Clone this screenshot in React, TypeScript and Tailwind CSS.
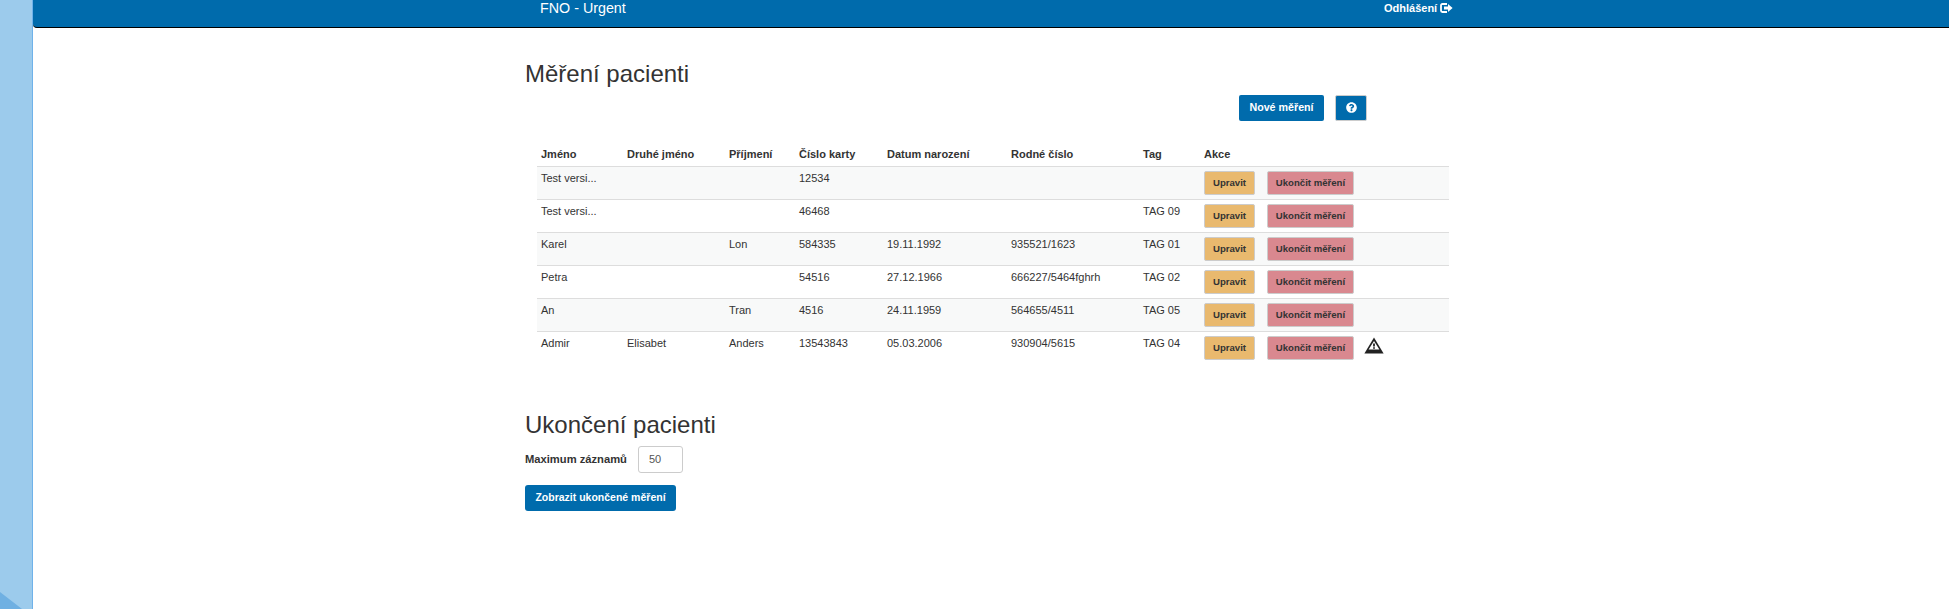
import { FaQuestionCircle } from 'react-icons/fa';

const columns = ['Jméno', 'Druhé jméno', 'Příjmení', 'Číslo karty', 'Datum narození', 'Rodné číslo', 'Tag', 'Akce'];

const patients = [
  { name: 'Test versi...', second: '', last: '', card: '12534', birth: '', id: '', tag: '' },
  { name: 'Test versi...', second: '', last: '', card: '46468', birth: '', id: '', tag: 'TAG 09' },
  { name: 'Karel', second: '', last: 'Lon', card: '584335', birth: '19.11.1992', id: '935521/1623', tag: 'TAG 01' },
  { name: 'Petra', second: '', last: '', card: '54516', birth: '27.12.1966', id: '666227/5464fghrh', tag: 'TAG 02' },
  { name: 'An', second: '', last: 'Tran', card: '4516', birth: '24.11.1959', id: '564655/4511', tag: 'TAG 05' },
  { name: 'Admir', second: 'Elisabet', last: 'Anders', card: '13543843', birth: '05.03.2006', id: '930904/5615', tag: 'TAG 04', warning: true },
];

function SignOutIcon() {
  return (
    <svg width="13" height="10" viewBox="0 0 13 10" className="ml-[3px]">
      <path d="M7 1H2.4C1.6 1 1 1.6 1 2.4v5.2C1 8.4 1.6 9 2.4 9H7" fill="none" stroke="white" strokeWidth="1.8" />
      <path d="M4 3.5h4V1l4.6 4L8 9V6.5H4z" fill="white" />
    </svg>
  );
}

function WarningIcon() {
  return (
    <svg width="20" height="17" viewBox="0 0 20 17" className="ml-[10px] mb-[5px]">
      <path d="M10 0.5 19.6 16.5H0.4z" fill="#222" />
      <path d="M10 4 15.4 12.6H4.6z" fill="white" />
      <path d="M9.1 6.4h1.8v3.2H9.1z" fill="#222" />
      <path d="M9.1 10.2h1.8v1.6H9.1z" fill="#222" />
    </svg>
  );
}

function Patients() {
  return (
    <table className="w-[912px] table-fixed border-collapse text-[11px] leading-[17px] text-[#333]">
      <colgroup>
        <col className="w-[86px]" />
        <col className="w-[102px]" />
        <col className="w-[70px]" />
        <col className="w-[88px]" />
        <col className="w-[124px]" />
        <col className="w-[132px]" />
        <col className="w-[61px]" />
        <col />
      </colgroup>
      <thead>
        <tr className="border-b-[1.5px] border-[#ddd]">
          {columns.map((col) => (
            <th key={col} className="px-1 pt-[5px] pb-[3px] text-left font-bold">{col}</th>
          ))}
        </tr>
      </thead>
      <tbody>
        {patients.map((p, i) => (
          <tr key={p.card} className={`h-[33px] border-b border-[#ddd] last:border-b-0 ${i % 2 === 0 ? 'bg-[#f8f9f9]' : ''}`}>
            <td className="px-1 pt-[3px] align-top">{p.name}</td>
            <td className="px-1 pt-[3px] align-top">{p.second}</td>
            <td className="px-1 pt-[3px] align-top">{p.last}</td>
            <td className="px-1 pt-[3px] align-top">{p.card}</td>
            <td className="px-1 pt-[3px] align-top">{p.birth}</td>
            <td className="px-1 pt-[3px] align-top">{p.id}</td>
            <td className="px-1 pt-[3px] align-top">{p.tag}</td>
            <td className="p-1 align-top">
              <div className="flex items-center">
                <button className="h-6 w-[51px] rounded-[2px] border border-[#ccc] bg-[#e9b96e] pb-px text-[9.6px] font-bold text-[#333]">Upravit</button>
                <button className="ml-3 h-6 w-[87px] rounded-[2px] border border-[#ccc] bg-[#d9888f] pb-px text-[9.6px] font-bold text-[#333]">Ukončit měření</button>
                {p.warning && <WarningIcon />}
              </div>
            </td>
          </tr>
        ))}
      </tbody>
    </table>
  );
}

export default function App() {
  return (
    <div className="flex h-screen overflow-hidden bg-white font-['Liberation_Sans',Arial,sans-serif]">
      <aside className="relative w-[33px] shrink-0 border-r border-[#6fb2ea] bg-[#9ccbec]">
        <svg width="22" height="17" viewBox="0 0 22 17" className="absolute bottom-0 left-0">
          <path d="M0 0 22 17H0z" fill="#6fb0e2" />
        </svg>
      </aside>

      <div className="min-w-0 flex-1">
        <nav className="flex h-[28px] items-start rounded-bl-[4px] border-b border-black bg-[#006bac] text-white">
          <span className="w-[851px] pl-[507px] text-[14.3px] leading-4">FNO - Urgent</span>
          <a className="mt-px flex items-center pl-[500px] text-[11px] font-bold leading-[14px]">
            Odhlášení
            <SignOutIcon />
          </a>
        </nav>

        <main className="ml-[492px] w-[924px] text-[#333]">
          <h1 className="mt-[33px] text-[24px] leading-[26px]">Měření pacienti</h1>

          <div className="mt-[8px] flex pl-[714px]">
            <button className="h-[26px] w-[85px] rounded-[2px] bg-[#006bac] pb-[2px] text-[10.7px] font-bold text-white">Nové měření</button>
            <button className="ml-[11px] flex h-[26px] w-[32px] items-center justify-center rounded-[2px] border border-[#ccc] bg-[#006bac] pb-[2px] text-white">
              <FaQuestionCircle className="text-[11px]" />
            </button>
          </div>

          <div className="mt-[20px] ml-3">
            <Patients />
          </div>

          <h2 className="mt-[47px] text-[24px] leading-[26px]">Ukončení pacienti</h2>

          <div className="mt-[8px] flex items-center">
            <label className="w-[113px] text-[11.2px] font-bold leading-[17px]">Maximum záznamů</label>
            <input
              defaultValue="50"
              className="h-[27px] w-[45px] rounded-[3px] border border-[#ccc] px-[10px] text-[11px] text-[#555]"
            />
          </div>

          <button className="mt-3 block h-[26px] w-[151px] rounded-[3px] bg-[#006bac] text-[10.5px] font-bold text-white">
            Zobrazit ukončené měření
          </button>
        </main>
      </div>
    </div>
  );
}
